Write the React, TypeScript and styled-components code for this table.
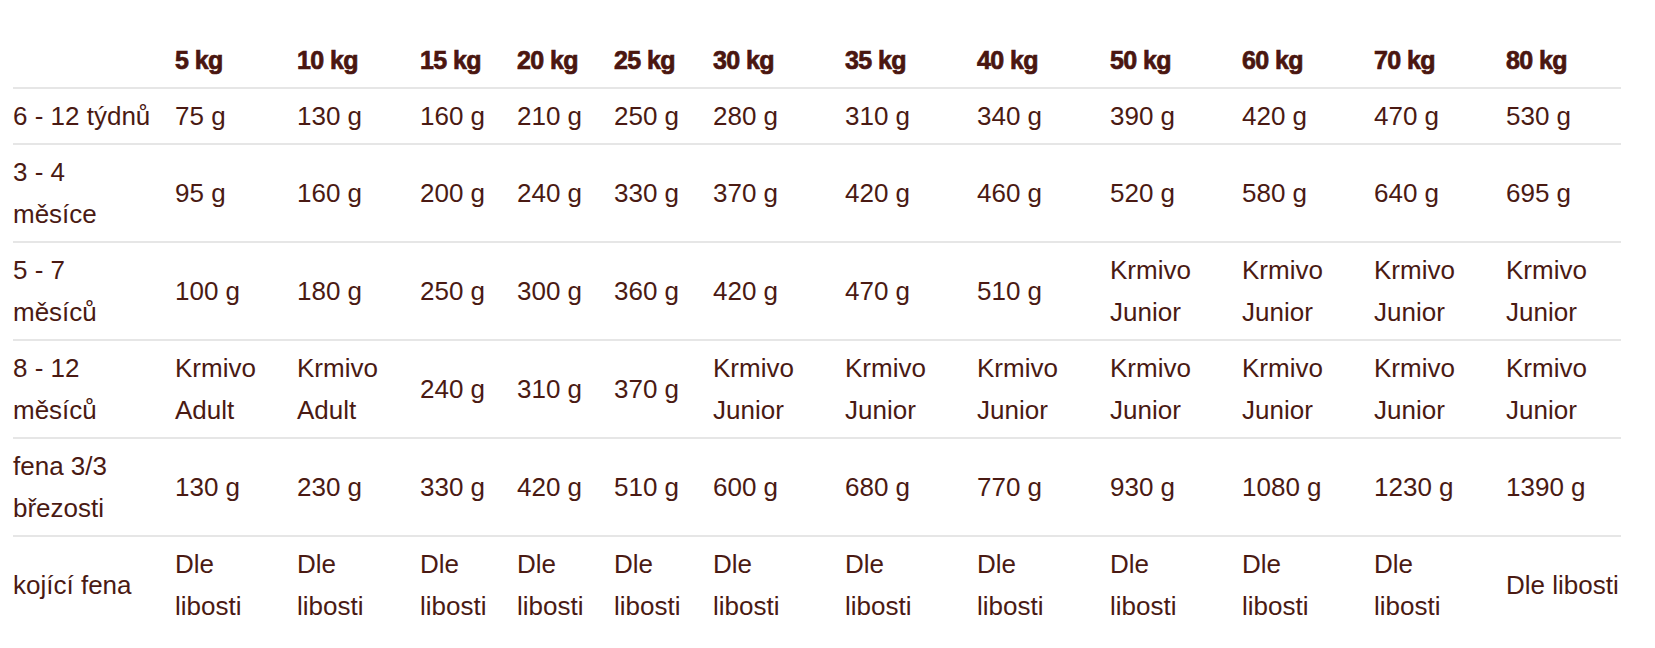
import React from 'react';
import styled, { createGlobalStyle } from 'styled-components';

const columns = [
  { label: '', width: 162 },
  { label: '5 kg', width: 122 },
  { label: '10 kg', width: 123 },
  { label: '15 kg', width: 97 },
  { label: '20 kg', width: 97 },
  { label: '25 kg', width: 99 },
  { label: '30 kg', width: 132 },
  { label: '35 kg', width: 132 },
  { label: '40 kg', width: 133 },
  { label: '50 kg', width: 132 },
  { label: '60 kg', width: 132 },
  { label: '70 kg', width: 132 },
  { label: '80 kg', width: 115 },
];

const junior = 'Krmivo\nJunior';
const adult = 'Krmivo\nAdult';
const dle = 'Dle\nlibosti';

const rows = [
  {
    label: '6 - 12 týdnů',
    values: ['75 g', '130 g', '160 g', '210 g', '250 g', '280 g', '310 g', '340 g', '390 g', '420 g', '470 g', '530 g'],
  },
  {
    label: '3 - 4\nměsíce',
    values: ['95 g', '160 g', '200 g', '240 g', '330 g', '370 g', '420 g', '460 g', '520 g', '580 g', '640 g', '695 g'],
  },
  {
    label: '5 - 7\nměsíců',
    values: ['100 g', '180 g', '250 g', '300 g', '360 g', '420 g', '470 g', '510 g', junior, junior, junior, junior],
  },
  {
    label: '8 - 12\nměsíců',
    values: [adult, adult, '240 g', '310 g', '370 g', junior, junior, junior, junior, junior, junior, junior],
  },
  {
    label: 'fena 3/3\nbřezosti',
    values: ['130 g', '230 g', '330 g', '420 g', '510 g', '600 g', '680 g', '770 g', '930 g', '1080 g', '1230 g', '1390 g'],
  },
  {
    label: 'kojící fena',
    values: [dle, dle, dle, dle, dle, dle, dle, dle, dle, dle, dle, 'Dle libosti'],
  },
];

const App: React.FC = () => {
  return (
    <>
      <GlobalStyle />
      <Wrapper>
        <Table>
          <thead>
            <tr>
              {columns.map((col) => (
                <HeadCell key={col.label || 'empty'} $width={col.width}>
                  {col.label}
                </HeadCell>
              ))}
            </tr>
          </thead>
          <tbody>
            {rows.map((row) => (
              <tr key={row.label}>
                <Cell>{row.label}</Cell>
                {row.values.map((value, i) => (
                  <Cell key={i}>{value}</Cell>
                ))}
              </tr>
            ))}
          </tbody>
        </Table>
      </Wrapper>
    </>
  );
};

const GlobalStyle = createGlobalStyle`
  body {
    margin: 0;
    background: #ffffff;
    font-family: "Liberation Sans", Arial, sans-serif;
    color: #4a1a13;
  }
`;

const Wrapper = styled.div`
  padding: 33px 0 0 13px;
`;

const Table = styled.table`
  width: 1608px;
  table-layout: fixed;
  border-collapse: separate;
  border-spacing: 0;
`;

const HeadCell = styled.th<{ $width: number }>`
  width: ${(p) => p.$width}px;
  padding: 6px 0;
  text-align: left;
  vertical-align: middle;
  font-size: 25px;
  font-weight: 700;
  line-height: 42px;
  letter-spacing: -0.6px;
  color: #4a1610;
  -webkit-text-stroke: 0.7px #4a1610;
`;

const Cell = styled.td`
  padding: 6px 0;
  border-top: 2px solid #e6e6e6;
  vertical-align: middle;
  font-size: 26px;
  line-height: 42px;
  white-space: pre-line;
`;

export default App;
